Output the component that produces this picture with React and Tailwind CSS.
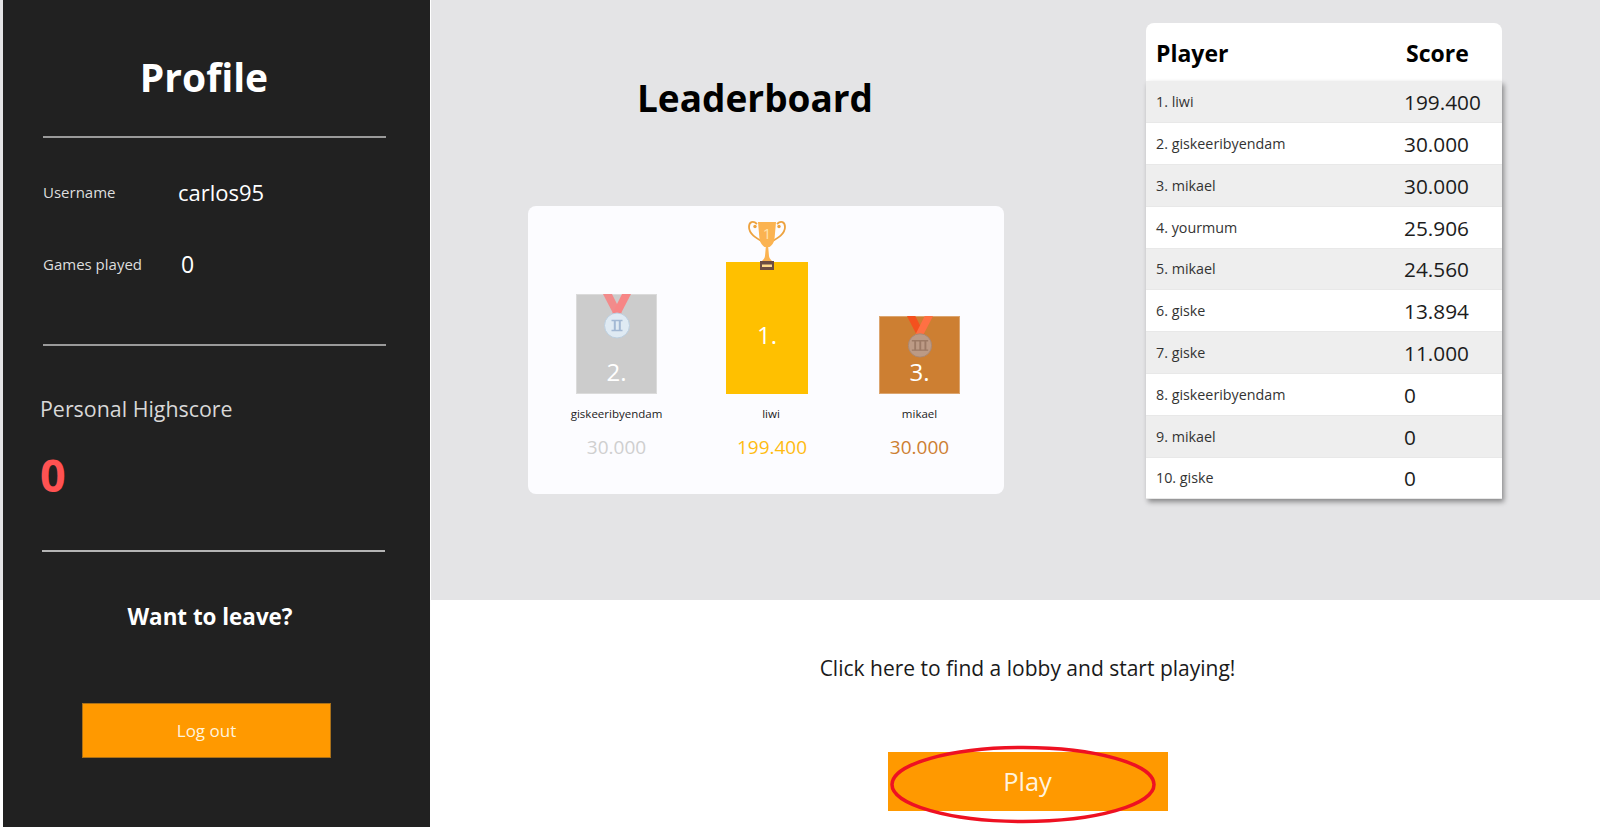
import React from 'react'

const FONT = "font-['Open_Sans',_'Noto_Sans',_sans-serif]"

const ROWS = [
  ['1. liwi', '199.400'],
  ['2. giskeeribyendam', '30.000'],
  ['3. mikael', '30.000'],
  ['4. yourmum', '25.906'],
  ['5. mikael', '24.560'],
  ['6. giske', '13.894'],
  ['7. giske', '11.000'],
  ['8. giskeeribyendam', '0'],
  ['9. mikael', '0'],
  ['10. giske', '0'],
]

function Trophy({ className }){
  return (
    <svg className={className} viewBox="0 0 38 50" fill="none">
      <path d="M9 4C5 0 1 2 1 7c0 7 7 11 14 15" stroke="#eda23f" strokeWidth="1.8" />
      <path d="M29 4c4-4 8-2 8 3 0 7-7 11-14 15" stroke="#eda23f" strokeWidth="1.8" />
      <circle cx="7" cy="6.500" r="1.700" fill="#eda23f" />
      <circle cx="31" cy="6.500" r="1.700" fill="#eda23f" />
      <path d="M10 2h18l-1.500 17c-1 5-3.500 7-5 8h-5c-1.500-1-4-3-5-8z" fill="#fbb351" />
      <path d="M17.800 27h2.400l.8 9c.4 3 2.500 4 3.500 5.500H13.500c1-1.500 3.100-2.500 3.500-5.500z" fill="#fbb351" />
      <rect x="12" y="41" width="14" height="9" fill="#6d4c41" />
      <rect x="14" y="44.500" width="10" height="2.500" fill="#ffd98c" />
      <text x="19" y="19" textAnchor="middle" fontSize="15" fill="#ffe3ad" fontFamily="Open Sans, sans-serif">1</text>
    </svg>
  )
}

function Medal({ className, left, right, disc, edge, mark, bars, gap }){
  const span = bars * gap + 1
  const start = 15 - span / 2
  return (
    <svg className={className} viewBox="0 0 30 46" fill="none">
      <path d="M1 0h9l10 20-5 7z" fill={left} />
      <path d="M20 0h9L15 27l-5-7z" fill={right} />
      <circle cx="15" cy="31.500" r="12.500" fill={disc} stroke={edge} strokeWidth="1" />
      <path d={`M${start} 26.500h${span}M${start} 36.500h${span}`} stroke={mark} strokeWidth="1.400" />
      {Array.from({ length: bars }).map((_, i) => (
        <rect key={i} x={start + i * gap + (gap - 1.400) / 2 + 0.5} y="26.500" width="2" height="10" fill={mark} />
      ))}
    </svg>
  )
}

function Podium({ barClass, labelClass, label, name, score, scoreClass, nameClass, children }){
  return (
    <div className="flex flex-col items-center">
      <div className={`relative flex flex-col items-center text-white text-[24px] leading-none border border-white/30 ${barClass}`}>
        {children}
        <span className={labelClass}>{label}</span>
      </div>
      <div className={`mt-[13px] h-[14px] text-[11.500px] leading-[14px] text-[#222] whitespace-nowrap ${nameClass}`}>{name}</div>
      <div className={`mt-[14px] text-[19px] leading-[24px] whitespace-nowrap ${scoreClass}`}>{score}</div>
    </div>
  )
}

function Sidebar(){
  return (
    <aside className="w-[427px] h-full shrink-0 bg-[#212121] text-white flex flex-col">
      <h1 className="h-[136px] pt-[50px] pr-[25px] text-center text-[39px] leading-[54px] font-bold">Profile</h1>
      <hr className="ml-10 w-[343px] border-0 border-t-2 border-[#9a9a9a]" />
      <div className="mt-[36px] ml-10 flex items-center h-[36px]">
        <span className="w-[135px] text-[15px] text-[#dedede]">Username</span>
        <span className="text-[22px]">carlos95</span>
      </div>
      <div className="mt-[36px] ml-10 flex items-center h-[36px]">
        <span className="w-[138px] text-[15px] text-[#dedede]">Games played</span>
        <span className="text-[23px]">0</span>
      </div>
      <hr className="mt-[62px] ml-10 w-[343px] border-0 border-t-2 border-[#9a9a9a]" />
      <div className="mt-[49px] ml-[37px] text-[21.400px] leading-[28px] text-[#d8d8d8]">Personal Highscore</div>
      <div className="mt-[24px] ml-[37px] text-[45px] leading-[56px] font-bold text-[#ff5252]">0</div>
      <hr className="mt-[47px] ml-[39px] w-[343px] border-0 border-t-2 border-[#b5b5b5]" />
      <div className="mt-[50px] pr-[13px] text-center text-[22.400px] leading-[30px] font-bold">Want to leave?</div>
      <button className="mt-[71px] ml-[79px] w-[249px] h-[55px] bg-[#ff9900] border border-[#a8701a] text-[17px] text-[#fff3de]">Log out</button>
    </aside>
  )
}

function Leaderboard(){
  return (
    <table className="w-[356px] border-collapse table-fixed">
      <thead>
        <tr className="h-[58px] bg-white text-[23px] font-bold text-black text-left">
          <th className="pl-[10px] pt-[3px] rounded-tl-lg font-bold">Player</th>
          <th className="w-[98px] pl-[2px] pt-[3px] rounded-tr-lg font-bold">Score</th>
        </tr>
      </thead>
      <tbody className="shadow-[2px_3px_5px_rgba(0,0,0,0.4)]">
        {ROWS.map(([player, score], i) => (
          <tr key={player} className={`h-[41.800px] border-b border-[#e8e8e8] ${i % 2 === 0 ? 'bg-[#eeeeee]' : 'bg-white'}`}>
            <td className="pl-[10px] text-[14.300px] text-[#333]">{player}</td>
            <td className="pt-[2px] text-[20.800px] text-[#1c1c1c]">{score}</td>
          </tr>
        ))}
      </tbody>
    </table>
  )
}

export default function App(){
  return (
    <div className={`relative flex w-full h-[827px] overflow-hidden bg-white ${FONT}`}>
      <div className="w-[3px] shrink-0">
        <div className="h-[600px] bg-[#e4e4e6]" />
      </div>
      <Sidebar />
      <main className="flex-1 flex flex-col border-l border-white">
        <section className="h-[600px] bg-[#e4e4e6] flex">
          <div className="w-[715px] shrink-0 flex flex-col">
            <h2 className="mt-[68px] ml-[86px] w-[476px] text-center text-[37px] leading-[60px] font-bold text-black">Leaderboard</h2>
            <div className="mt-[78px] ml-[97px] w-[476px] h-[288px] rounded-lg bg-[#fcfcff] flex items-start">
              <div className="mt-[88px] ml-[48px] w-[81px]">
                <Podium
                  barClass="w-[81px] h-[100px] bg-[#cccccc]"
                  labelClass="absolute bottom-[9px]"
                  label="2."
                  name="giskeeribyendam"
                  score="30.000"
                  scoreClass="text-[#cfcfcf]"
                >
                  <Medal className="absolute top-[-1px] left-[25px] w-[30px] h-[46px]" left="#f28b8b" right="#f78686" disc="#dfeaf3" edge="#bccfe0" mark="#a3b9d4" bars={2} gap={5} />
                </Podium>
              </div>
              <div className="mt-[56px] ml-[69px] w-[82px]">
                <Podium
                  barClass="w-[82px] h-[132px] bg-[#ffc000] border-none"
                  labelClass="mt-[61px]"
                  label="1."
                  name="liwi"
                  score="199.400"
                  nameClass="pl-[8px]"
                  scoreClass="pl-[10px] text-[#ffbb11]"
                >
                  <Trophy className="absolute top-[-42px] left-[22px] w-[38px] h-[50px]" />
                </Podium>
              </div>
              <div className="mt-[110px] ml-[71px] w-[81px]">
                <Podium
                  barClass="w-[81px] h-[78px] bg-[#cd7f32]"
                  labelClass="absolute bottom-[9px]"
                  label="3."
                  name="mikael"
                  score="30.000"
                  scoreClass="text-[#cd7f32]"
                >
                  <Medal className="absolute top-[-1px] left-[26px] w-[28px] h-[43px]" left="#f4511e" right="#ff7043" disc="#bc9a85" edge="#a98671" mark="#9c7a66" bars={3} gap={5.500} />
                </Podium>
              </div>
            </div>
          </div>
          <div className="pt-[23px]">
            <Leaderboard />
          </div>
        </section>
        <section className="flex-1 flex flex-col items-center pl-[24px]">
          <p className="mt-[52px] text-[21px] leading-[32px] text-[#1a1a1a]">Click here to find a lobby and start playing!</p>
          <button className="mt-[68px] w-[280px] h-[59px] bg-[#ff9900] text-[25.500px] text-[#fff3de]">Play</button>
        </section>
      </main>
      {/* hand drawn red circle round the play button */}
      <svg className="absolute left-[889px] top-[745px] w-[268px] h-[79px]" viewBox="0 0 268 79" fill="none">
        <ellipse cx="134" cy="39.500" rx="131" ry="37" stroke="#ee1122" strokeWidth="3.500" />
      </svg>
    </div>
  )
}
